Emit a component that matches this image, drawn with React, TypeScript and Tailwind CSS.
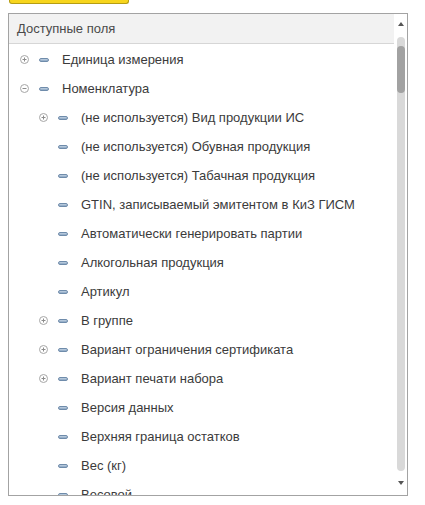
import React from 'react'

type Field = {
    title: string
    level: number
    expander?: 'plus' | 'minus'
}

const fields: Field[] = [
    { title: 'Единица измерения', level: 0, expander: 'plus' },
    { title: 'Номенклатура', level: 0, expander: 'minus' },
    { title: '(не используется) Вид продукции ИС', level: 1, expander: 'plus' },
    { title: '(не используется) Обувная продукция', level: 1 },
    { title: '(не используется) Табачная продукция', level: 1 },
    { title: 'GTIN, записываемый эмитентом в КиЗ ГИСМ', level: 1 },
    { title: 'Автоматически генерировать партии', level: 1 },
    { title: 'Алкогольная продукция', level: 1 },
    { title: 'Артикул', level: 1 },
    { title: 'В группе', level: 1, expander: 'plus' },
    { title: 'Вариант ограничения сертификата', level: 1, expander: 'plus' },
    { title: 'Вариант печати набора', level: 1, expander: 'plus' },
    { title: 'Версия данных', level: 1 },
    { title: 'Верхняя граница остатков', level: 1 },
    { title: 'Вес (кг)', level: 1 },
    { title: 'Весовой', level: 1 },
]

const Expander = ({ kind }: { kind: 'plus' | 'minus' }) => (
    <svg width="9" height="9" viewBox="0 0 9 9" className="shrink-0">
        <circle cx="4.5" cy="4.5" r="4" fill="white" stroke="#a6a6a6" strokeWidth="1" />
        <line x1="2.5" y1="4.5" x2="6.5" y2="4.5" stroke="#8c8c8c" strokeWidth="1" />
        {kind === 'plus' && (
            <line x1="4.5" y1="2.5" x2="4.5" y2="6.5" stroke="#8c8c8c" strokeWidth="1" />
        )}
    </svg>
)

const FieldRow = ({ field }: { field: Field }) => (
    <div
        className={`flex items-center h-[29px] shrink-0 ${field.level === 0 ? 'pl-[11px]' : 'pl-[30px]'}`}
    >
        <div className="w-[9px] h-[9px] flex items-center justify-center shrink-0">
            {field.expander && <Expander kind={field.expander} />}
        </div>
        {/* field icon */}
        <div className="ml-[10px] w-[10px] h-[4px] rounded-[2px] border border-[#6f8cab] bg-gradient-to-b from-[#c3d3e3] to-[#8aa5c2] shrink-0" />
        <span className="ml-[13px] whitespace-nowrap text-[13px] text-[#3b3b3b]">
            {field.title}
        </span>
    </div>
)

export default function App() {
    return (
        <div
            className="w-[425px] h-[505px] bg-white overflow-hidden"
            style={{ fontFamily: '"Liberation Sans", Arial, sans-serif' }}
        >
            {/* bottom edge of the toolbar button above */}
            <div className="ml-[9px] w-[120px] h-[4px] bg-[#f7d51d] border-x border-b border-[#b59d14] rounded-b-[3px]" />

            <div className="mt-[9px] ml-[8px] w-[400px] h-[483px] border border-[#a3a3a3] flex">
                <div className="flex-1 flex flex-col overflow-hidden">
                    <div className="h-[30px] shrink-0 bg-[#f2f2f2] border-b border-[#d6d6d6] flex items-center pl-[8px] text-[13px] text-[#4a4a4a]">
                        Доступные поля
                    </div>
                    <div className="flex flex-col pt-[1px] overflow-hidden">
                        {fields.map((field) => (
                            <FieldRow key={field.title} field={field} />
                        ))}
                    </div>
                </div>

                {/* scrollbar */}
                <div className="w-[13px] flex flex-col items-center pt-[8px]">
                    <div className="w-0 h-0 border-x-[3.5px] border-x-transparent border-b-[4px] border-b-[#555]" />
                    <div className="mt-[11px] w-[8px] h-[434px] rounded-full bg-[#d9d9d9] pt-[9px]">
                        <div className="w-[8px] h-[47px] rounded-full bg-[#a2a2a2]" />
                    </div>
                    <div className="mt-[10px] w-0 h-0 border-x-[3.5px] border-x-transparent border-t-[4px] border-t-[#555]" />
                </div>
            </div>
        </div>
    )
}
